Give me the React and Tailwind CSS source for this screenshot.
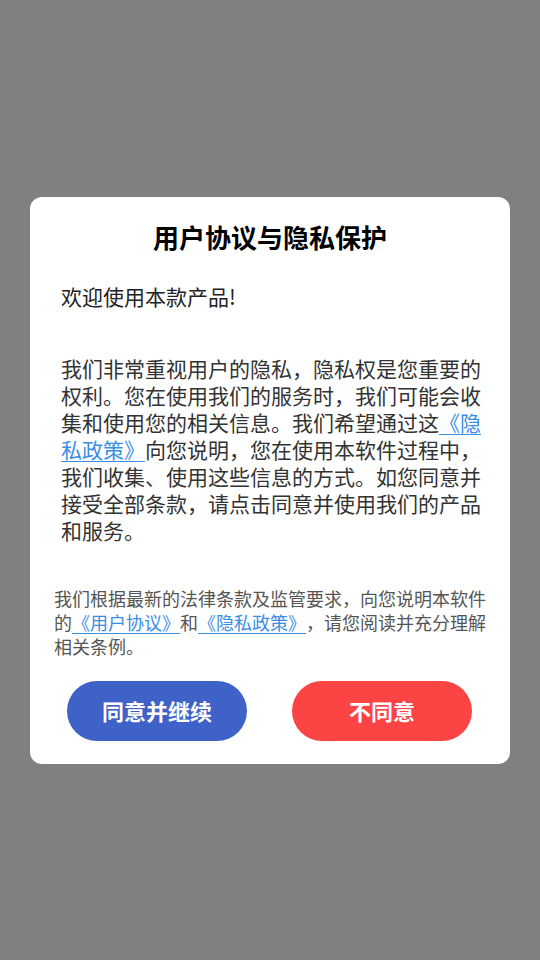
import React from 'react';

const font = { fontFamily: '"Noto Sans CJK SC", "Noto Sans", sans-serif' };

const Link = ({ children }) => (
  <span className="text-[#3a8ee6] underline underline-offset-[3px] decoration-1">{children}</span>
);

const App = () => {
  return (
    <div className="w-[540px] h-[960px] bg-[#808080] flex items-center justify-center [text-spacing-trim:space-all]" style={font}>
      {/* 弹窗 */}
      <div className="w-[480px] bg-white rounded-xl pt-[23px] pb-[23px]">
        <h1 className="text-center text-[26px] leading-[34px] font-bold text-black">用户协议与隐私保护</h1>

        <p className="mt-[29px] pl-[31px] text-[21px] leading-[27px] text-[#222]">欢迎使用本款产品!</p>

        <p className="mt-[45px] pl-[31px] pr-[25px] text-[21px] leading-[27px] text-[#333]">
          我们非常重视用户的隐私，隐私权是您重要的权利。您在使用我们的服务时，我们可能会收集和使用您的相关信息。我们希望通过这<Link>《隐私政策》</Link>向您说明，您在使用本软件过程中，我们收集、使用这些信息的方式。如您同意并接受全部条款，请点击同意并使用我们的产品和服务。
        </p>

        <p className="mt-[42px] pl-[24px] pr-[20px] text-[18px] leading-[24px] text-[#555]">
          我们根据最新的法律条款及监管要求，向您说明本软件的<Link>《用户协议》</Link>和<Link>《隐私政策》</Link>，请您阅读并充分理解相关条例。
        </p>

        <div className="mt-[23px] flex justify-between pl-[37px] pr-[38px]">
          <button className="w-[180px] h-[60px] rounded-full bg-[#3f62c8] text-white text-[22px] font-bold">同意并继续</button>
          <button className="w-[180px] h-[60px] rounded-full bg-[#fd4444] text-white text-[22px] font-bold">不同意</button>
        </div>
      </div>
    </div>
  );
};

export default App;
